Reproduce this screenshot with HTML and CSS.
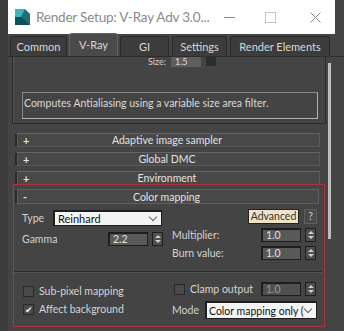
FILE: index.html
```html
<!DOCTYPE html>
<html lang="en">
<head>
  <meta charset="UTF-8" />
  <title>Render Setup</title>
  <link rel="stylesheet" href="styles.css">
</head>
<body>
  <div class="window">
    <div class="titlebar">
      <svg class="app-icon" width="15" height="16" viewBox="0 0 15 16">
        <path d="M0 0 L10 0 L15 5 L15 16 L0 16 Z" fill="#1f6f7a"/>
        <path d="M0 0 L10 0 L6 8 L0 8 Z" fill="#41b4c0"/>
        <path d="M0 8 L6 8 L15 16 L0 16 Z" fill="#0f4f58"/>
      </svg>
      <span class="title">Render Setup: V-Ray Adv 3.0...</span>
      <div class="win-buttons">
        <svg class="wb-min" width="11" height="11" viewBox="0 0 11 11"><path d="M0 5.5 H11" stroke="#8c8c8c" stroke-width="1"/></svg>
        <svg class="wb-max" width="11" height="11" viewBox="0 0 11 11"><rect x="0.5" y="0.5" width="10" height="10" fill="none" stroke="#c4c4c4" stroke-width="1"/></svg>
        <svg class="wb-close" width="11" height="11" viewBox="0 0 11 11"><path d="M0.5 0.5 L10.5 10.5 M10.5 0.5 L0.5 10.5" stroke="#8c8c8c" stroke-width="1"/></svg>
      </div>
    </div>

    <div class="tabs">
      <div class="tab tab-common">Common</div>
      <div class="tab tab-active tab-vray">V-Ray</div>
      <div class="tab tab-gi">GI</div>
      <div class="tab tab-settings">Settings</div>
      <div class="tab tab-elements">Render Elements</div>
    </div>

    <div class="content">
      <div class="scroll">
        <div class="filter-panel">
          <div class="size-row">
            <span class="size-label">Size:</span>
            <span class="size-value">1.5</span>
            <span class="size-drop"></span>
          </div>
          <div class="desc-box">Computes Antialiasing using a variable size area filter.</div>
        </div>

        <div class="rollout"><span class="sign">+</span><span class="rtitle">Adaptive image sampler</span></div>
        <div class="rollout"><span class="sign">+</span><span class="rtitle">Global DMC</span></div>
        <div class="rollout"><span class="sign">+</span><span class="rtitle">Environment</span></div>

        <div class="highlight">
          <div class="rollout rollout-open"><span class="sign">-</span><span class="rtitle">Color mapping</span></div>

          <div class="cm-body">
            <div class="cm-left">
              <div class="field">
                <span class="lbl lbl-type">Type</span>
                <div class="select select-type">Reinhard<span class="chev"></span></div>
              </div>
              <div class="field">
                <span class="lbl lbl-gamma">Gamma</span>
                <div class="num">2.2</div>
                <div class="spin"></div>
              </div>
            </div>
            <div class="cm-right">
              <div class="field field-adv">
                <div class="btn-adv">Advanced</div>
                <div class="btn-help">?</div>
              </div>
              <div class="field">
                <span class="lbl lbl-right">Multiplier:</span>
                <div class="num">1.0</div>
                <div class="spin"></div>
              </div>
              <div class="field">
                <span class="lbl lbl-right">Burn value:</span>
                <div class="num">1.0</div>
                <div class="spin"></div>
              </div>
            </div>
          </div>

          <div class="separator"></div>

          <div class="opts">
            <div class="opts-left">
              <label class="check"><span class="box"></span>Sub-pixel mapping</label>
              <label class="check"><span class="box">&#10004;</span>Affect background</label>
            </div>
            <div class="opts-right">
              <div class="field">
                <label class="check check-clamp"><span class="box"></span>Clamp output</label>
                <div class="num num-dim">1.0</div>
                <div class="spin"></div>
              </div>
              <div class="field">
                <span class="lbl lbl-mode">Mode</span>
                <div class="select select-mode"><span class="sel-text">Color mapping only (</span><span class="chev"></span></div>
              </div>
            </div>
          </div>
        </div>
      </div>
      <div class="scrollbar"><div class="thumb"></div></div>
    </div>
  </div>
</body>
</html>
```

FILE: styles.css
```css
body {
  margin: 0;
  background-color: #3b3b3b;
  font-family: 'Lato', sans-serif;
  overflow: hidden;
}

.window {
  width: 336px;
  height: 331px;
  margin-left: 8px;
  background-color: #444444;
  color: #dcdcdc;
  font-size: 10.5px;
  overflow: hidden;
}

/* title bar */
.titlebar {
  height: 34px;
  width: 327px;
  background-color: #ffffff;
  display: flex;
  align-items: center;
  padding-left: 7px;
  box-sizing: border-box;
}

.app-icon {
  margin-right: 6px;
}

.title {
  font-size: 13.5px;
  color: #8a8a8a;
  white-space: nowrap;
  letter-spacing: -0.2px;
}

.win-buttons {
  display: flex;
  align-items: center;
  margin-left: auto;
  margin-right: 14px;
}

.wb-max { margin-left: 30px; }
.wb-close { margin-left: 34px; }

/* tabs */
.tabs {
  display: flex;
  align-items: flex-end;
  height: 22px;
  padding-left: 2px;
  border-bottom: 1px solid #2d2d2d;
}

.tab {
  height: 20px;
  line-height: 19px;
  box-sizing: border-box;
  background-color: #3c3c3c;
  border: 1px solid #2a2a2a;
  border-bottom: none;
  border-radius: 3px 3px 0 0;
  text-align: center;
  font-size: 11px;
  color: #d8d8d8;
  margin-right: 2px;
}

.tab-common { width: 57px; }
.tab-vray { width: 49px; }
.tab-gi { width: 49px; }
.tab-settings { width: 55px; margin-left: 1px; }
.tab-elements { width: 100px; margin-left: 1px; }

.tab-active {
  height: 23px;
  line-height: 21px;
  background-color: #4a4a4a;
  border-color: #626262;
}

/* content */
.content {
  display: flex;
  height: 274px;
}

.scroll {
  width: 318px;
  padding-left: 4px;
  box-sizing: border-box;
}

.filter-panel {
  height: 66px;
  border: 1px solid #2a2a2a;
  border-top: none;
  box-shadow: inset 1px 0 0 #555;
  overflow: hidden;
}

.size-row {
  display: flex;
  align-items: center;
  height: 12px;
  margin-top: -2px;
  padding-left: 135px;
  gap: 5px;
  font-size: 9px;
  color: #cfcfcf;
}

.size-value {
  width: 26px;
  background-color: #5e5e5e;
  color: #ddd;
  padding-left: 4px;
}

.size-drop {
  width: 10px;
  height: 10px;
  background-color: #2e2e2e;
}

.desc-box {
  margin: 25px 7px 0 9px;
  height: 27px;
  box-sizing: border-box;
  border: 1px solid #b0b0b0;
  border-top-color: #8a8a8a;
  border-left-color: #8a8a8a;
  padding: 4px 1px;
  font-size: 10.5px;
  color: #dadada;
}

/* rollouts */
.rollout {
  display: flex;
  align-items: center;
  height: 14px;
  box-sizing: border-box;
  margin: 0 6px 5px 5px;
  background-color: #484848;
  border: 1px solid #5a5a5a;
  border-top-color: #646464;
  box-shadow: -3px 0 0 -1px #2a2a2a;
  font-size: 10.5px;
  color: #e2e2e2;
}

.filter-panel + .rollout {
  margin-top: 9px;
}

.sign {
  width: 14px;
  padding-left: 5px;
  font-weight: bold;
  font-size: 11px;
}

.rtitle {
  flex: 1;
  text-align: center;
  padding-right: 22px;
}

.highlight {
  margin: -6px 1px 0 1px;
  border: 1px solid #ad333c;
  height: 143px;
  box-sizing: border-box;
}

.rollout-open {
  height: 15px;
  margin: 4px 5px 0 3px;
  border-color: #59606e;
}

/* color mapping body */
.cm-body {
  display: flex;
  padding: 6px 0 0 8px;
}

.cm-left {
  width: 150px;
  display: flex;
  flex-direction: column;
  gap: 6px;
}

.cm-right {
  display: flex;
  flex-direction: column;
  gap: 4px;
  margin-top: -1px;
}

.field {
  display: flex;
  align-items: center;
}

.lbl {
  color: #d2d2d2;
}

.lbl-type { width: 31px; }
.lbl-gamma { width: 86px; }
.lbl-right { width: 89px; }
.lbl-mode { width: 33px; }

.select {
  display: flex;
  align-items: center;
  height: 16px;
  box-sizing: border-box;
  background-color: #f4f4f4;
  border: 1px solid #1e1e1e;
  border-width: 2px 1px 1px 2px;
  color: #111;
  font-size: 11px;
  padding-left: 3px;
  position: relative;
  overflow: hidden;
  white-space: nowrap;
}

.select-type { width: 109px; }

.chev {
  position: absolute;
  right: 5px;
  top: 2px;
  width: 5px;
  height: 5px;
  border-right: 1px solid #666;
  border-bottom: 1px solid #666;
  transform: rotate(45deg);
}

.num {
  width: 40px;
  height: 14px;
  box-sizing: border-box;
  background-color: #595959;
  border: 1px solid #1e1e1e;
  border-width: 2px 1px 1px 2px;
  color: #e0e0e0;
  line-height: 11px;
  padding-left: 3px;
  margin-right: 4px;
}

.num-dim {
  color: #9a9a9a;
  background-color: #505050;
}

.spin {
  width: 11px;
  height: 14px;
  box-sizing: border-box;
  background-color: #4e4e4e;
  border: 1px solid #1e1e1e;
  position: relative;
}

.spin::before,
.spin::after {
  content: "";
  position: absolute;
  left: 2px;
  border-left: 3px solid transparent;
  border-right: 3px solid transparent;
}

.spin::before {
  top: 2px;
  border-bottom: 3px solid #cfcfcf;
}

.spin::after {
  bottom: 2px;
  border-top: 3px solid #cfcfcf;
}

.field-adv {
  padding-left: 76px;
  gap: 5px;
}

.btn-adv {
  width: 51px;
  height: 15px;
  box-sizing: border-box;
  background-color: #efe3c6;
  border: 1px solid #222;
  color: #333;
  text-align: center;
  line-height: 13px;
  font-size: 10.5px;
}

.btn-help {
  width: 13px;
  height: 15px;
  box-sizing: border-box;
  background-color: #4a4a4a;
  border: 1px solid #5e5e5e;
  text-align: center;
  line-height: 13px;
  color: #cfcfcf;
}

.separator {
  margin: 11px 2px 0 0;
  border-top: 1px solid #2c2c2c;
  border-bottom: 1px solid #555;
}

/* options */
.opts {
  display: flex;
  padding: 9px 0 0 8px;
}

.opts-left {
  width: 150px;
  display: flex;
  flex-direction: column;
  gap: 6px;
  padding-top: 3px;
}

.opts-right {
  display: flex;
  flex-direction: column;
  gap: 5px;
}

.check {
  display: flex;
  align-items: center;
  color: #d4d4d4;
}

.check-clamp {
  width: 89px;
}

.box {
  width: 11px;
  height: 11px;
  box-sizing: border-box;
  background-color: #4a4a4a;
  border: 1px solid #2a2a2a;
  margin: 0 5px 0 1px;
  font-size: 9px;
  line-height: 9px;
  text-align: center;
  color: #f0f0f0;
}

.check-clamp .box {
  margin-left: 2px;
}

.select-mode {
  width: 112px;
  height: 18px;
  font-size: 10.5px;
  padding-left: 2px;
}

.sel-text {
  width: 97px;
  overflow: hidden;
}

.select-mode .chev {
  top: 3px;
}

/* scrollbar */
.scrollbar {
  width: 10px;
  padding: 6px 0 0 2px;
}

.thumb {
  width: 3px;
  height: 176px;
  background-color: #bdbdbd;
}
```
